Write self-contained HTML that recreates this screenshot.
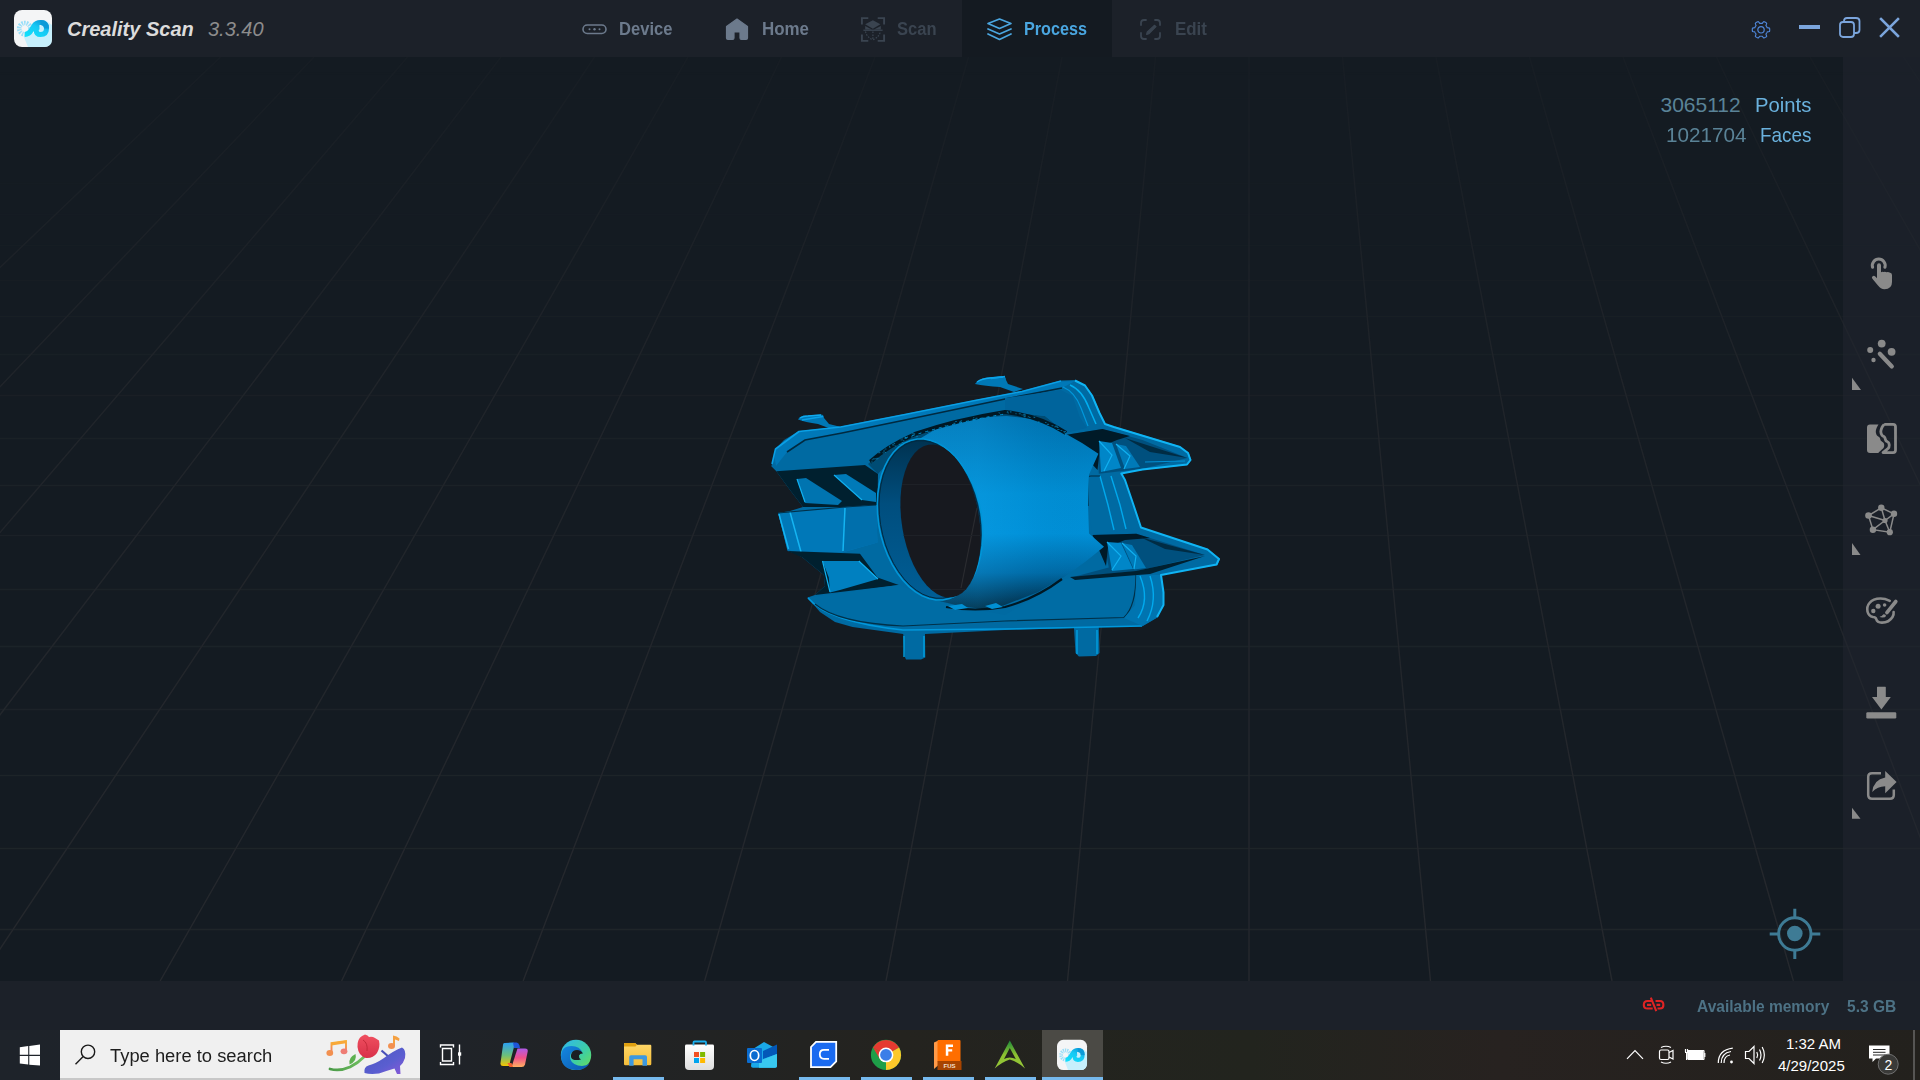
<!DOCTYPE html>
<html><head><meta charset="utf-8">
<style>
*{margin:0;padding:0;box-sizing:border-box}
html,body{width:1920px;height:1080px;overflow:hidden;background:#141b22;font-family:"Liberation Sans",sans-serif}
.a{position:absolute}
#hdr{left:0;top:0;width:1920px;height:57px;background:#1c2129}
#tabact{left:962px;top:0;width:150px;height:57px;background:#141a21}
.tt{font-weight:bold;font-size:18px;line-height:20px;top:19px;white-space:nowrap;transform-origin:0 0}
#vp{left:0;top:57px;width:1920px;height:924px;overflow:hidden}
#side{left:1843px;top:57px;width:77px;height:924px;background:rgba(34,38,47,0.5)}
#status{left:0;top:981px;width:1920px;height:49px;background:#1c2129}
#task{left:0;top:1030px;width:1920px;height:50px;background:linear-gradient(90deg,#1e232a 0px,#1f2329 420px,#24231f 900px,#22241e 1250px,#272220 1500px,#23211d 1920px)}
svg{position:absolute;overflow:visible}
</style></head><body>
<div id="vp" class="a">
<svg width="1920" height="924" viewBox="0 57 1920 924" style="left:0;top:0"><defs><linearGradient id="fade" x1="0" y1="57" x2="0" y2="981" gradientUnits="userSpaceOnUse"><stop offset="0" stop-color="#fff" stop-opacity="0.2"/><stop offset="0.35" stop-color="#fff" stop-opacity="0.7"/><stop offset="1" stop-color="#fff" stop-opacity="1"/></linearGradient><mask id="gm" maskUnits="userSpaceOnUse" x="0" y="57" width="1920" height="924"><rect x="0" y="57" width="1920" height="924" fill="url(#fade)"/></mask><linearGradient id="fadeh" x1="0" y1="57" x2="0" y2="981" gradientUnits="userSpaceOnUse"><stop offset="0" stop-color="#fff" stop-opacity="0.1"/><stop offset="0.4" stop-color="#fff" stop-opacity="0.75"/><stop offset="1" stop-color="#fff" stop-opacity="1"/></linearGradient><mask id="gmh" maskUnits="userSpaceOnUse" x="0" y="57" width="1920" height="924"><rect x="0" y="57" width="1920" height="924" fill="url(#fadeh)"/></mask></defs><g mask="url(#gm)">
<g stroke="#20262a" stroke-width="1.3" mask="url(#gmh)"><line x1="0" y1="73.5" x2="1920" y2="73.5"/><line x1="0" y1="98.5" x2="1920" y2="98.5"/><line x1="0" y1="126.5" x2="1920" y2="126.5"/><line x1="0" y1="154.5" x2="1920" y2="154.5"/><line x1="0" y1="183.5" x2="1920" y2="183.5"/><line x1="0" y1="214.5" x2="1920" y2="214.5"/><line x1="0" y1="245.5" x2="1920" y2="245.5"/><line x1="0" y1="280.5" x2="1920" y2="280.5"/><line x1="0" y1="316.5" x2="1920" y2="316.5"/><line x1="0" y1="354.5" x2="1920" y2="354.5"/><line x1="0" y1="395.5" x2="1920" y2="395.5"/><line x1="0" y1="438.5" x2="1920" y2="438.5"/><line x1="0" y1="485.5" x2="1920" y2="485.5"/><line x1="0" y1="535.5" x2="1920" y2="535.5"/><line x1="0" y1="589.5" x2="1920" y2="589.5"/><line x1="0" y1="646.5" x2="1920" y2="646.5"/><line x1="0" y1="709.5" x2="1920" y2="709.5"/><line x1="0" y1="775.5" x2="1920" y2="775.5"/><line x1="0" y1="848.5" x2="1920" y2="848.5"/><line x1="0" y1="929.5" x2="1920" y2="929.5"/></g>
<g stroke="#26292e" stroke-width="1.4"><line x1="220.5" y1="57" x2="-747.3" y2="981"/><line x1="314.0" y1="57" x2="-565.8" y2="981"/><line x1="407.5" y1="57" x2="-384.3" y2="981"/><line x1="501.0" y1="57" x2="-202.8" y2="981"/><line x1="594.5" y1="57" x2="-21.3" y2="981"/><line x1="688.0" y1="57" x2="160.1" y2="981"/><line x1="781.5" y1="57" x2="341.6" y2="981"/><line x1="875.0" y1="57" x2="523.1" y2="981"/><line x1="968.5" y1="57" x2="704.6" y2="981"/><line x1="1062.0" y1="57" x2="886.0" y2="981"/><line x1="1155.5" y1="57" x2="1067.5" y2="981"/><line x1="1249.0" y1="57" x2="1249.0" y2="981"/><line x1="1342.5" y1="57" x2="1430.5" y2="981"/><line x1="1436.0" y1="57" x2="1612.0" y2="981"/><line x1="1529.5" y1="57" x2="1793.4" y2="981"/><line x1="1623.0" y1="57" x2="1974.9" y2="981"/><line x1="1716.5" y1="57" x2="2156.4" y2="981"/><line x1="1810.0" y1="57" x2="2337.9" y2="981"/><line x1="1903.5" y1="57" x2="2519.3" y2="981"/></g>
</g></svg>
</div>

<svg class="a" style="left:0;top:0" width="1920" height="1080" viewBox="0 0 1920 1080">
<defs>
<linearGradient id="tubeV" x1="0" y1="416" x2="0" y2="612" gradientUnits="userSpaceOnUse"><stop offset="0" stop-color="#0072b0"/><stop offset="0.4" stop-color="#008ed4"/><stop offset="0.6" stop-color="#0090d8"/><stop offset="0.8" stop-color="#006aa6"/><stop offset="0.92" stop-color="#003c60"/><stop offset="1" stop-color="#001c2c"/></linearGradient>
<linearGradient id="tubeH" x1="978" y1="0" x2="1100" y2="0" gradientUnits="userSpaceOnUse"><stop offset="0" stop-color="#20b8ff" stop-opacity="0.18"/><stop offset="0.35" stop-color="#20b8ff" stop-opacity="0.06"/><stop offset="1" stop-color="#000000" stop-opacity="0.0"/></linearGradient>
<linearGradient id="wallG" x1="0" y1="440" x2="0" y2="600" gradientUnits="userSpaceOnUse"><stop offset="0" stop-color="#003250"/><stop offset="0.4" stop-color="#004e7e"/><stop offset="1" stop-color="#005e96"/></linearGradient>
</defs>
<polygon fill="#006aa2" points="799.0,431.0 840.7,426.6 905.0,414.0 975.0,400.0 1022.0,391.0 1061.0,380.6 1075.0,380.0 1085.0,385.0 1092.5,395.0 1100.0,412.5 1105.0,423.8 1113.8,426.3 1180.0,446.3 1188.8,452.5 1191.3,460.0 1187.5,465.0 1142.5,470.0 1121.3,473.8 1125.0,480.0 1133.8,505.0 1141.3,527.5 1207.5,548.8 1220.0,558.8 1217.5,565.0 1161.3,575.0 1163.8,592.5 1163.8,605.0 1157.5,617.5 1142.5,626.3 1098.8,627.0 1099.5,653.0 1096.0,656.0 1078.9,656.5 1075.5,653.0 1074.0,628.0 1005.0,630.0 925.0,634.0 925.3,657.4 921.0,659.5 906.0,659.5 904.5,656.0 903.2,634.0 852.5,627.0 835.0,622.0 820.0,612.0 807.5,597.5 815.0,595.0 825.0,586.0 823.8,575.0 802.5,557.5 796.3,553.8 787.5,551.0 778.1,513.1 790.0,511.0 803.0,507.0 790.0,490.0 776.3,471.3 771.3,466.3 773.8,457.5 775.5,448.9 784.0,440.0" />
<path fill="#0078b6" d="M798 419.5 Q800 415.5 806 415.5 L821 414.5 Q824 414.5 824 418 L829 424 L841 427 L834 430 L818 424 Q805 422 798 419.5 Z"/>
<path fill="none" stroke="#10aaee" stroke-width="1.3" d="M800 418 Q803 416 808 416 L821 415"/>
<path fill="#0078b6" d="M975 384 Q978 379 987 377.5 L1002 376 Q1006 376 1006 380 L1008 384 L1023 389 L1014 392 L1000 387 Q985 386 975 384 Z"/>
<path fill="none" stroke="#10aaee" stroke-width="1.3" d="M977 382 Q982 378.5 990 378 L1003 377"/>
<polygon fill="#0078b8" points="776.0,466.0 774.5,457.5 776.0,449.0 799.0,432.0 840.7,427.5 905.0,415.0 975.0,401.0 1022.0,392.0 1061.0,381.5 1075.0,381.0 1062.0,388.0 1005.0,399.0 905.0,420.0 842.0,433.0 805.0,440.0 787.0,452.0" />
<path fill="none" stroke="#002a40" stroke-width="1.6" d="M787 452 L805 440 L842 433 L905 420 L1005 399 L1062 388"/>
<polygon fill="#004c74" points="868.0,464.0 890.0,446.0 915.0,433.0 952.0,421.0 1005.0,412.0 1045.0,416.0 1066.0,433.0 1030.0,428.0 990.0,430.0 950.0,437.0 921.0,442.0 895.0,455.0 878.0,474.0" />
<polygon fill="#00202f" points="776.3,471.3 865.0,465.0 878.0,474.0 877.5,505.0 845.0,507.0 803.0,507.0 790.0,490.0" />
<polygon fill="#0074b0" points="797.0,479.0 806.0,478.0 842.0,501.0 838.0,505.0 805.0,503.0" />
<polygon fill="#007ab8" points="834.0,475.0 846.0,474.0 876.0,493.0 876.0,502.0 862.0,500.0" />
<path fill="none" stroke="#10b0f0" stroke-width="1.2" d="M797 479 L805 502 M834 475 L862 500"/>
<polygon fill="#0078b8" points="778.1,513.1 845.0,507.0 876.0,505.0 877.5,542.5 842.5,552.5 801.3,553.1 787.5,550.0" />
<polygon fill="#006fac" points="845.0,507.0 876.0,505.0 877.5,542.5 843.0,552.0" />
<path fill="none" stroke="#14b4f2" stroke-width="1.5" d="M779 514 L788.5 549 M790 512 L801 552 M845 508 L843 551"/>
<path fill="none" stroke="#003048" stroke-width="1.2" d="M778 513 L845 507 L876 505"/>
<polygon fill="#00202f" points="787.5,551.0 860.0,553.8 877.5,577.5 898.8,585.0 815.0,595.0 825.0,586.0 823.8,575.0 802.5,557.5" />
<polygon fill="#0080c0" points="822.5,561.0 858.8,561.0 878.0,579.0 840.0,590.0 830.0,592.5 828.8,577.5" />
<path fill="none" stroke="#10b0f0" stroke-width="1.2" d="M822.5 561 L830 592 M858.8 561 L878 579"/>
<polygon fill="#006ca4" points="807.5,597.5 898.8,585.0 946.0,603.8 1005.0,615.0 1065.0,578.8 1136.3,575.0 1135.0,605.0 1123.8,617.5 1005.0,621.3 902.5,631.0 852.5,625.0 825.0,613.8" />
<path fill="none" stroke="#0098dc" stroke-width="1.6" d="M808 598 Q828 622 903 630 L1005 629 L1074 627.5 L1142 626"/>
<path fill="none" stroke="#003048" stroke-width="1.2" d="M815 604 Q838 623 903 626 L1005 621 L1124 617.5 Q1136 606 1136 575"/>
<polygon fill="#00649c" points="1005.0,398.0 1061.0,390.0 1072.5,396.0 1080.0,417.5 1087.0,428.0 1066.0,433.0 1045.0,416.0 1005.0,411.0" />
<path fill="none" stroke="#00aef0" stroke-width="1.5" d="M1070 385 Q1082 390 1089 408 L1096 424"/>
<path fill="none" stroke="#0098dc" stroke-width="1.2" d="M1063 387 Q1075 392 1081 408 L1088 426"/>
<polygon fill="#00507e" points="1065.0,435.0 1102.5,429.0 1142.5,440.0 1187.5,458.0 1142.5,468.8 1098.8,473.8 1097.5,447.5" />
<polygon fill="#001a28" points="1065.0,435.0 1102.5,429.0 1130.0,436.0 1117.0,440.0 1100.0,447.0 1097.5,470.0" />
<polygon fill="#002c44" points="1125.0,438.0 1187.5,458.0 1150.0,452.0" />
<polygon fill="#0086c8" points="1099.0,441.0 1112.0,443.0 1121.0,468.0 1101.0,472.0" />
<polygon fill="#007ab8" points="1116.0,444.0 1126.0,446.0 1140.0,467.0 1125.0,469.0" />
<path fill="none" stroke="#10b0f0" stroke-width="1.2" d="M1099 441 L1112 455 L1104 471 M1116 444 L1130 456 L1124 469"/>
<path fill="none" stroke="#0090d4" stroke-width="1.2" d="M1145 462 L1185 461"/>
<polygon fill="#006aa2" points="1087.5,477.0 1123.8,477.5 1133.8,505.0 1141.3,527.5 1092.5,535.0 1087.5,505.0" />
<path fill="none" stroke="#00a8ec" stroke-width="1.4" d="M1100 476 L1108 505 L1114 530 M1111 476 L1120 505 L1126 529"/>
<path fill="none" stroke="#002a40" stroke-width="1.2" d="M1088 506 L1088 478 Q1088 476 1091 476 L1100 476"/>
<polygon fill="#00507e" points="1092.5,535.0 1136.3,533.8 1205.0,555.0 1136.3,571.3 1071.3,577.5 1108.8,567.5 1105.0,547.5" />
<polygon fill="#001a28" points="1092.5,535.0 1136.3,533.8 1150.0,538.0 1125.0,540.0 1108.0,547.0 1106.0,566.0" />
<polygon fill="#002c44" points="1140.0,537.0 1205.0,555.0 1165.0,549.0" />
<polygon fill="#0086c8" points="1107.0,542.0 1121.0,543.0 1133.0,569.0 1112.0,571.0" />
<polygon fill="#007ab8" points="1122.0,543.0 1132.0,545.0 1146.0,568.0 1134.0,569.5" />
<path fill="none" stroke="#10b0f0" stroke-width="1.2" d="M1107 542 L1121 556 L1112 570 M1122 543 L1136 556 L1134 569"/>
<polygon fill="#002030" points="1070.0,577.0 1136.0,571.0 1205.0,556.0 1150.0,574.0 1075.0,580.0" />
<polygon fill="#0074b0" points="1136.3,575.0 1161.0,575.0 1163.5,592.5 1163.5,605.0 1157.0,617.5 1142.5,626.0 1124.0,618.0 1135.0,605.0" />
<path fill="none" stroke="#00aaee" stroke-width="1.4" d="M1140 576 Q1150 600 1138 618 M1150 576 Q1158 600 1147 621"/>
<polygon fill="url(#tubeV)" points="917.7,440.0 947.3,422.2 975.0,417.6 1006.6,416.0 1037.7,419.5 1064.0,432.8 1082.0,443.0 1098.4,453.7 1089.0,474.6 1088.0,505.0 1089.0,533.4 1104.0,546.7 1085.0,562.0 1064.0,577.0 1037.7,592.2 1003.5,605.5 982.6,609.0 960.0,606.0 935.5,600.0 946.0,593.0 965.0,585.0 977.5,561.0 981.0,530.0 977.5,505.0 970.0,482.5 952.5,457.5 928.8,445.0" />
<polygon fill="url(#tubeH)" points="917.7,440.0 947.3,422.2 975.0,417.6 1006.6,416.0 1037.7,419.5 1064.0,432.8 1082.0,443.0 1098.4,453.7 1089.0,474.6 1088.0,505.0 1089.0,533.4 1104.0,546.7 1085.0,562.0 1064.0,577.0 1037.7,592.2 1003.5,605.5 982.6,609.0 960.0,606.0 935.5,600.0 946.0,593.0 965.0,585.0 977.5,561.0 981.0,530.0 977.5,505.0 970.0,482.5 952.5,457.5 928.8,445.0" />
<path fill="none" stroke="#001824" stroke-width="4" d="M870 462 Q886 447 915 434 Q955 420 1005 412 Q1040 416 1066 433"/>
<path fill="none" stroke="#0090d0" stroke-width="1" stroke-dasharray="3 4" d="M905 438 Q955 422 1005 414"/>
<path fill="none" stroke="#001824" stroke-width="2.2" d="M946 607 Q975 612 1005 607 Q1035 599 1062 579"/>
<path fill="#0090d4" d="M948 606 L962 604 L968 608 L955 610 Z M985 606 L996 603 L1003 607 L992 609 Z"/>
<path fill="#0a9ad8" opacity="0.55" d="M998.0 412.4h2.2v1.1h-1.1zM1007.2 412.5h1.7v1.1h-1.1zM891.8 444.3h2.4v1.1h-1.9zM1062.8 431.6h2.5v1.1h-1.1zM878.8 452.1h1.5v1.1h-2.2zM872.2 459.2h1.1v1.1h-2.1zM1009.9 411.3h1.6v1.1h-1.5zM1061.0 429.9h1.3v1.1h-2.2zM894.2 445.5h2.1v1.1h-1.4zM875.0 458.2h1.2v1.1h-1.7zM913.0 433.3h2.2v1.1h-2.2zM975.8 417.8h1.7v1.1h-2.3zM953.4 422.7h2.1v1.1h-2.0zM1056.0 426.5h2.0v1.1h-1.0zM944.7 425.2h1.3v1.1h-1.4zM1023.3 414.3h1.1v1.1h-1.7zM1023.5 413.8h1.8v1.1h-2.1zM973.2 417.2h1.1v1.1h-1.2zM1021.2 414.5h1.4v1.1h-1.0zM959.9 421.2h1.2v1.1h-2.3zM1046.8 423.8h2.3v1.1h-2.4zM1054.7 426.2h1.2v1.1h-2.0zM876.3 458.3h1.2v1.1h-1.9zM868.4 460.6h1.5v1.1h-1.0zM893.6 442.9h1.5v1.1h-1.5zM875.8 458.5h1.7v1.1h-1.5zM872.5 458.3h2.2v1.1h-1.2zM876.6 457.7h2.0v1.1h-2.4zM1023.4 416.1h2.3v1.1h-1.8zM883.2 450.5h1.8v1.1h-2.0zM1057.3 429.0h2.2v1.1h-2.2zM1055.4 425.6h2.1v1.1h-2.5zM955.4 420.9h1.5v1.1h-2.2zM1064.8 434.4h1.3v1.1h-1.3zM884.2 452.0h1.9v1.1h-1.0zM1029.4 416.9h1.2v1.1h-1.6zM1051.2 425.2h2.2v1.1h-1.5zM1033.1 416.8h2.1v1.1h-1.3zM870.8 461.5h2.0v1.1h-1.9zM1064.4 433.0h1.8v1.1h-1.2zM902.3 440.2h2.1v1.1h-1.2zM904.3 437.4h1.4v1.1h-1.4zM1028.2 416.2h1.1v1.1h-2.1zM972.5 419.3h2.2v1.1h-2.3zM888.8 446.7h1.7v1.1h-1.3zM901.2 438.5h1.9v1.1h-1.2zM882.0 452.5h2.2v1.1h-1.2zM1007.1 411.3h1.1v1.1h-1.7zM901.6 442.0h1.9v1.1h-1.8zM1018.6 413.2h2.2v1.1h-1.8zM900.5 443.5h1.4v1.1h-1.8zM904.5 436.8h1.7v1.1h-1.1zM885.3 448.4h1.2v1.1h-2.2zM1045.3 422.0h1.2v1.1h-1.7zM1063.5 431.0h2.5v1.1h-2.2zM898.7 443.8h1.6v1.1h-1.5zM900.1 439.5h1.7v1.1h-1.0zM960.9 420.3h1.2v1.1h-2.4zM912.4 433.2h1.1v1.1h-2.2zM982.6 417.5h2.0v1.1h-2.4zM927.5 431.6h2.1v1.1h-1.1zM905.5 438.0h1.4v1.1h-1.0zM905.4 437.6h1.1v1.1h-2.3zM915.6 435.7h2.4v1.1h-1.9zM888.9 445.7h1.2v1.1h-1.1zM911.3 436.3h1.3v1.1h-1.7zM1015.2 413.2h1.4v1.1h-1.0zM1038.2 421.3h1.4v1.1h-1.7zM1056.3 427.0h2.3v1.1h-1.6zM1024.6 414.6h1.3v1.1h-2.3z"/>
<path fill="url(#wallG)" d="M982.4 524.7 L982.7 535.2 L982.2 545.4 L980.7 555.1 L978.4 564.3 L975.2 572.6 L971.3 580.1 L966.7 586.5 L961.4 591.8 L955.6 595.9 L949.4 598.6 L942.8 600.0 L936.0 600.0 L929.1 598.6 L922.2 595.9 L915.5 591.9 L909.0 586.6 L902.9 580.2 L897.2 572.7 L892.1 564.4 L887.6 555.2 L883.9 545.5 L880.9 535.3 L878.8 524.9 L877.6 514.3 L877.3 503.8 L877.8 493.6 L879.3 483.9 L881.6 474.7 L884.8 466.4 L888.7 458.9 L893.3 452.5 L898.6 447.2 L904.4 443.1 L910.6 440.4 L917.2 439.0 L924.0 439.0 L930.9 440.4 L937.8 443.1 L944.5 447.1 L951.0 452.4 L957.1 458.8 L962.8 466.3 L967.9 474.6 L972.4 483.8 L976.1 493.5 L979.1 503.7 L981.2 514.1 Z"/>
<path fill="none" stroke="#0096d8" stroke-width="1.6" d="M982.4 524.7 L982.7 535.2 L982.2 545.4 L980.7 555.1 L978.4 564.3 L975.2 572.6 L971.3 580.1 L966.7 586.5 L961.4 591.8 L955.6 595.9 L949.4 598.6 L942.8 600.0 L936.0 600.0 L929.1 598.6 L922.2 595.9 L915.5 591.9 L909.0 586.6 L902.9 580.2 L897.2 572.7 L892.1 564.4 L887.6 555.2 L883.9 545.5 L880.9 535.3 L878.8 524.9 L877.6 514.3 L877.3 503.8 L877.8 493.6 L879.3 483.9 L881.6 474.7 L884.8 466.4 L888.7 458.9 L893.3 452.5 L898.6 447.2 L904.4 443.1 L910.6 440.4 L917.2 439.0 L924.0 439.0 L930.9 440.4 L937.8 443.1 L944.5 447.1 L951.0 452.4 L957.1 458.8 L962.8 466.3 L967.9 474.6 L972.4 483.8 L976.1 493.5 L979.1 503.7 L981.2 514.1 Z"/>
<path fill="none" stroke="#002a40" stroke-width="1" d="M980.6 524.7 L981.0 534.9 L980.4 544.9 L979.0 554.4 L976.8 563.4 L973.8 571.5 L970.0 578.8 L965.6 585.1 L960.5 590.3 L954.9 594.2 L948.9 596.9 L942.6 598.2 L936.0 598.2 L929.3 596.8 L922.7 594.2 L916.2 590.2 L909.9 585.1 L904.0 578.8 L898.5 571.5 L893.5 563.3 L889.2 554.3 L885.5 544.8 L882.7 534.8 L880.6 524.6 L879.4 514.3 L879.0 504.1 L879.6 494.1 L881.0 484.6 L883.2 475.6 L886.2 467.5 L890.0 460.2 L894.4 453.9 L899.5 448.7 L905.1 444.8 L911.1 442.1 L917.4 440.8 L924.0 440.8 L930.7 442.2 L937.3 444.8 L943.8 448.8 L950.1 453.9 L956.0 460.2 L961.5 467.5 L966.5 475.7 L970.8 484.7 L974.5 494.2 L977.3 504.2 L979.4 514.4 Z"/>
<path fill="#17191f" d="M980.0 524.5 L980.6 534.5 L980.5 544.2 L979.7 553.5 L978.2 562.3 L976.1 570.3 L973.4 577.6 L970.1 583.8 L966.3 589.0 L962.1 593.0 L957.5 595.8 L952.6 597.3 L947.5 597.5 L942.3 596.4 L937.0 594.0 L931.9 590.3 L926.8 585.5 L922.0 579.6 L917.5 572.6 L913.4 564.8 L909.8 556.2 L906.7 547.0 L904.2 537.4 L902.3 527.5 L901.0 517.5 L900.4 507.5 L900.5 497.8 L901.3 488.5 L902.8 479.7 L904.9 471.7 L907.6 464.4 L910.9 458.2 L914.7 453.0 L918.9 449.0 L923.5 446.2 L928.4 444.7 L933.5 444.5 L938.7 445.6 L944.0 448.0 L949.1 451.7 L954.2 456.5 L959.0 462.4 L963.5 469.4 L967.6 477.2 L971.2 485.8 L974.3 495.0 L976.8 504.6 L978.7 514.5 Z"/>
<clipPath id="holeclip"><path d="M980.0 524.5 L980.6 534.5 L980.5 544.2 L979.7 553.5 L978.2 562.3 L976.1 570.3 L973.4 577.6 L970.1 583.8 L966.3 589.0 L962.1 593.0 L957.5 595.8 L952.6 597.3 L947.5 597.5 L942.3 596.4 L937.0 594.0 L931.9 590.3 L926.8 585.5 L922.0 579.6 L917.5 572.6 L913.4 564.8 L909.8 556.2 L906.7 547.0 L904.2 537.4 L902.3 527.5 L901.0 517.5 L900.4 507.5 L900.5 497.8 L901.3 488.5 L902.8 479.7 L904.9 471.7 L907.6 464.4 L910.9 458.2 L914.7 453.0 L918.9 449.0 L923.5 446.2 L928.4 444.7 L933.5 444.5 L938.7 445.6 L944.0 448.0 L949.1 451.7 L954.2 456.5 L959.0 462.4 L963.5 469.4 L967.6 477.2 L971.2 485.8 L974.3 495.0 L976.8 504.6 L978.7 514.5 Z"/></clipPath>
<g clip-path="url(#holeclip)"><path stroke="#2a2b30" stroke-width="1.2" d="M977 508 L961 588"/><path stroke="#1e2127" stroke-width="1" d="M880 484.5 H990 M880 535.5 H990 M880 589.5 H990"/></g>
<path fill="none" stroke="#10b4f4" stroke-width="2" stroke-linejoin="round" d="M1075 380.5 L1085 385.5 L1092 395.5 L1099.5 413 L1105 424 L1113.8 427 L1180 447 L1188 453 L1190.5 460 L1187 464.5 L1142.5 469.5 L1121.3 473.5 L1125 480 L1133.5 505 L1141 527.5 L1207.5 549.5 L1219 559 L1216.5 564.5 L1161 575 L1163.5 592.5 L1163.5 605 L1157 617"/>
<path fill="none" stroke="#0aa0e6" stroke-width="1.6" stroke-linejoin="round" d="M772 464 L775.5 449 L799 431.5 L840.7 427 L905 414.5 L975 400.5 L1022 391.5 L1061 381"/>
<path fill="none" stroke="#0aa0e6" stroke-width="1.5" d="M802 420 L823 416.5 M991 378.5 L1005 376.5"/>
<path fill="none" stroke="#00a0e0" stroke-width="1.4" d="M904 657 V636 M924 657 V636 M1077 654 V630 M1097 654 V630"/>
</svg>
<div id="side" class="a"></div>
<div id="hdr" class="a"></div>
<div id="tabact" class="a"></div>

<!-- logo -->
<svg class="a" style="left:14px;top:10px" width="38" height="37" viewBox="0 0 38 37">
<defs><linearGradient id="lg1" x1="0" y1="1" x2="1" y2="0"><stop offset="0" stop-color="#10e0fb"/><stop offset="0.6" stop-color="#16c8f4"/><stop offset="1" stop-color="#0898d8"/></linearGradient></defs>
<rect x="0" y="0" width="38" height="37" rx="8" fill="#f4f5f6"/>
<path d="M9.5 26 L14 37 H30 Q38 37 38 29 V15 L31 10 L22 22 Z" fill="#c6effc"/>
<circle cx="10.8" cy="18.6" r="5.6" fill="none" stroke="#8fdcf8" stroke-width="4.6" stroke-dasharray="1.5 1" opacity="0.9"/>
<path d="M10.8 24.4 Q15 24.4 17.5 20 L19.5 16.5 Q22 12.6 26.5 12.6 Q32.5 12.6 32.5 18.6 Q32.5 24.6 26.5 24.6 Q22.2 24.6 22.2 20.5 Q22.2 17 25.5 17" fill="none" stroke="url(#lg1)" stroke-width="5"/>
<path d="M26.5 12.6 Q32.5 12.6 32.5 18.6" fill="none" stroke="#0a9ad8" stroke-width="5"/>
</svg>
<div class="a" style="left:67px;top:18px;font:italic bold 20px 'Liberation Sans';color:#dcdcdc;white-space:nowrap">Creality Scan</div>
<div class="a" style="left:208px;top:18px;font:italic 20px 'Liberation Sans';color:#8c8c8c;white-space:nowrap">3.3.40</div>

<!-- tabs -->
<svg class="a" style="left:582px;top:24px" width="25" height="11" viewBox="0 0 25 11"><rect x="1" y="1" width="23" height="8.5" rx="4.25" fill="none" stroke="#6c7a8c" stroke-width="1.6"/><circle cx="7.5" cy="5.2" r="1" fill="#6c7a8c"/><circle cx="12.5" cy="5.2" r="1.2" fill="#6c7a8c"/><circle cx="17.5" cy="5.2" r="1" fill="#6c7a8c"/></svg>
<div class="a tt" style="left:619px;color:#6c7a8c;transform:scaleX(0.92)">Device</div>
<svg class="a" style="left:725px;top:18px" width="24" height="23" viewBox="0 0 24 23"><path d="M1.5 8.5 L12 1 L22.5 8.5 V20 Q22.5 21.5 21 21.5 H16.5 Q15 21.5 15 20 V14 H9 V20 Q9 21.5 7.5 21.5 H3 Q1.5 21.5 1.5 20 Z" fill="#6c7a8c" stroke="#6c7a8c" stroke-width="1.2" stroke-linejoin="round"/></svg>
<div class="a tt" style="left:762px;color:#6c7a8c;transform:scaleX(0.94)">Home</div>
<svg class="a" style="left:0;top:0" width="1920" height="60" viewBox="0 0 1920 60"><g fill="none" stroke="#3a4450" stroke-width="1.9"><path d="M861.9 24.5V18.1H868.3M877.7 18.1H884.1V24.5M884.1 34.5V40.9H877.7M868.3 40.9H861.9V34.5"/></g>
<g fill="#3a4450"><path d="M865.2 24.3L872.9 20.3 880.4 24.3 872.9 28.7Z"/><path d="M865.2 26L865.2 29.6 871.8 29.6Z"/><path d="M880.8 26L880.8 29.6 874 29.6Z"/><rect x="863.4" y="29.6" width="19.2" height="1.3"/></g>
<g fill="none" stroke="#3a4450" stroke-width="1.2" stroke-dasharray="1.6 1.3"><path d="M865.5 31.5Q866.5 37 872.9 39.8Q879.3 37 880.4 31.5M872.9 31.5V39"/></g></svg>
<div class="a tt" style="left:897px;color:#3a4450;transform:scaleX(0.92)">Scan</div>
<svg class="a" style="left:987px;top:18px" width="26" height="23" viewBox="0 0 26 23" fill="none" stroke="#4aa6e0" stroke-width="1.7" stroke-linejoin="round" stroke-linecap="round"><path d="M1 5.5L12.5 1 24 5.5 12.5 10.5Z"/><path d="M1 11L12.5 16 24 11"/><path d="M1 16L12.5 21.5 24 16"/></svg>
<div class="a tt" style="left:1024px;color:#4aa6e0;transform:scaleX(0.9)">Process</div>
<svg class="a" style="left:1140px;top:19px" width="21" height="21" viewBox="0 0 21 21" fill="none" stroke="#3a4450" stroke-width="1.8" stroke-linecap="round"><path d="M1 6V4Q1 1 4 1H6M15 1H17Q20 1 20 4V6M20 14V17Q20 20 17 20H15M6 20H4Q1 20 1 17V14"/><path d="M14.6 6.3L16 7.7 9 14.7 6.6 15.4 7.3 13Z" fill="#3a4450" stroke-width="1.2" stroke-linejoin="round"/></svg>
<div class="a tt" style="left:1175px;color:#3a4450;transform:scaleX(0.94)">Edit</div>

<!-- window controls -->
<svg class="a" style="left:1751px;top:19.5px" width="20" height="20" viewBox="0 0 20 20"><path d="M18.70 9.80 L18.68 10.37 L18.63 10.94 L18.49 11.49 L17.34 11.77 L16.20 11.90 L16.01 12.29 L15.83 12.67 L15.63 13.05 L15.40 13.41 L15.16 13.76 L14.92 14.12 L15.37 15.17 L15.70 16.31 L15.30 16.70 L14.83 17.03 L14.35 17.33 L13.85 17.60 L13.33 17.84 L12.78 17.99 L11.97 17.14 L11.28 16.22 L10.85 16.24 L10.43 16.29 L10.00 16.30 L9.57 16.29 L9.15 16.24 L8.72 16.22 L8.03 17.14 L7.22 17.99 L6.67 17.84 L6.15 17.60 L5.65 17.33 L5.17 17.03 L4.70 16.70 L4.30 16.31 L4.63 15.17 L5.08 14.12 L4.84 13.76 L4.60 13.41 L4.37 13.05 L4.17 12.67 L3.99 12.29 L3.80 11.90 L2.66 11.77 L1.51 11.49 L1.37 10.94 L1.32 10.37 L1.30 9.80 L1.32 9.23 L1.37 8.66 L1.51 8.11 L2.66 7.83 L3.80 7.70 L3.99 7.31 L4.17 6.93 L4.37 6.55 L4.60 6.19 L4.84 5.84 L5.08 5.48 L4.63 4.43 L4.30 3.29 L4.70 2.90 L5.17 2.57 L5.65 2.27 L6.15 2.00 L6.67 1.76 L7.22 1.61 L8.03 2.46 L8.72 3.38 L9.15 3.36 L9.57 3.31 L10.00 3.30 L10.43 3.31 L10.85 3.36 L11.28 3.38 L11.97 2.46 L12.78 1.61 L13.33 1.76 L13.85 2.00 L14.35 2.27 L14.83 2.57 L15.30 2.90 L15.70 3.29 L15.37 4.43 L14.92 5.48 L15.16 5.84 L15.40 6.19 L15.63 6.55 L15.83 6.93 L16.01 7.31 L16.20 7.70 L17.34 7.83 L18.49 8.11 L18.63 8.66 L18.68 9.23 Z" fill="none" stroke="#4f86d8" stroke-width="1.15" stroke-linejoin="round"/><circle cx="10" cy="9.8" r="3.2" fill="none" stroke="#4f86d8" stroke-width="1.2"/></svg>
<div class="a" style="left:1799px;top:25px;width:21px;height:4px;background:#7ba5dc"></div>
<svg class="a" style="left:1839px;top:17px" width="22" height="21" viewBox="0 0 22 21" fill="none" stroke="#7ba5dc" stroke-width="1.8"><rect x="1" y="5" width="14" height="15" rx="3"/><path d="M5 5V4Q5 1 8 1H17Q20.5 1 20.5 4V13Q20.5 16 17 16H15"/></svg>
<svg class="a" style="left:1879px;top:17px" width="21" height="21" viewBox="0 0 21 21" stroke="#7ba5dc" stroke-width="2.5" stroke-linecap="square"><path d="M2 2L19 19M19 2L2 19"/></svg>

<!-- points/faces -->
<div class="a" style="left:1660.5px;top:93px;font:21px 'Liberation Sans';color:#5a8397;white-space:nowrap;transform:scaleX(1.0);transform-origin:0 0">3065112</div>
<div class="a" style="left:1755px;top:93px;font:21px 'Liberation Sans';color:#6ab1dd;white-space:nowrap;transform:scaleX(0.965);transform-origin:0 0">Points</div>
<div class="a" style="left:1665.5px;top:123px;font:21px 'Liberation Sans';color:#5a8397;white-space:nowrap;transform:scaleX(0.985);transform-origin:0 0">1021704</div>
<div class="a" style="left:1760px;top:123px;font:21px 'Liberation Sans';color:#6ab1dd;white-space:nowrap;transform:scaleX(0.9);transform-origin:0 0">Faces</div>

<div id="status" class="a"></div>
<div id="task" class="a"></div>

<svg class="a" style="left:0;top:0" width="1920" height="1080" viewBox="0 0 1920 1080">
<g fill="#8a8a8a" stroke="none">
<!-- hand -->
<path d="M1872.6 267.2 A6.4 6.4 0 1 1 1884.9 267.2" fill="none" stroke="#8a8a8a" stroke-width="3.1" stroke-linecap="round"/>
<path d="M1877 265.4 Q1877 263.3 1879 263.3 Q1881 263.3 1881 265.4 V272.2 Q1882.3 271.2 1883.6 272 Q1885.2 271.2 1886.6 272.3 Q1888 271.5 1889.5 272.4 Q1892 272.8 1892 275 V282 Q1892 289.2 1884.5 289.2 Q1880.5 289.2 1878 285.5 L1872.4 278.8 Q1871.2 277.3 1872.6 276.2 Q1874 275.3 1875.3 276.5 L1877 278.2 Z"/>
<!-- wand -->
<circle cx="1881.7" cy="343.6" r="3.9"/><circle cx="1891.6" cy="351.8" r="3.9"/><circle cx="1870.2" cy="350" r="3"/><circle cx="1873.5" cy="360" r="2.2"/>
<path d="M1879.8 353.7 L1891.8 366.5" stroke="#8a8a8a" stroke-width="4.2" stroke-linecap="round"/>
<path d="M1852 377.8 L1852 390 L1861 390 Z"/>
<!-- split -->
<path d="M1870 424.4 H1878.5 C1878.22 424.92 1877.25 426.28 1876.80 427.50 C1876.35 428.72 1875.77 430.37 1875.80 431.70 C1875.83 433.03 1876.37 434.52 1877.00 435.50 C1877.63 436.48 1878.95 436.72 1879.60 437.60 C1880.25 438.48 1880.20 439.87 1880.90 440.80 C1881.60 441.73 1883.30 442.12 1883.80 443.20 C1884.30 444.28 1884.40 446.07 1883.90 447.30 C1883.40 448.53 1881.73 449.67 1880.80 450.60 C1879.87 451.53 1878.72 452.52 1878.30 452.90 H1870 Q1867 452.9 1867 450 V427.4 Q1867 424.4 1870 424.4 Z"/>
<path d="M1884.2 424.3 H1893 Q1895.5 424.3 1895.5 426.8 V450 Q1895.5 452.6 1893 452.6 H1883 C1883.47 452.23 1884.82 451.27 1885.80 450.40 C1886.78 449.53 1888.40 448.63 1888.90 447.40 C1889.40 446.17 1889.30 444.13 1888.80 443.00 C1888.30 441.87 1886.60 441.55 1885.90 440.60 C1885.20 439.65 1885.25 438.20 1884.60 437.30 C1883.95 436.40 1882.63 436.15 1882.00 435.20 C1881.37 434.25 1880.80 432.92 1880.80 431.60 C1880.80 430.28 1881.43 428.52 1882.00 427.30 C1882.57 426.08 1883.83 424.80 1884.20 424.30" fill="none" stroke="#8a8a8a" stroke-width="2.8" stroke-linejoin="round"/>
<!-- mesh -->
<g stroke="#8a8a8a" stroke-width="1.5" fill="none"><path d="M1881.3 507.8 L1868.5 515.5 L1872.9 529.7 L1889.8 532.2 L1894 513.8 Z M1881.3 507.8 L1885 520.5 M1868.5 515.5 L1885 520.5 M1894 513.8 L1885 520.5 M1872.9 529.7 L1885 520.5 M1889.8 532.2 L1885 520.5"/></g>
<circle cx="1881.3" cy="507.8" r="3.2"/><circle cx="1868.5" cy="515.5" r="3.3"/><circle cx="1894" cy="513.8" r="3.2"/><circle cx="1872.9" cy="529.7" r="3.2"/><circle cx="1889.8" cy="532.2" r="3.1"/><circle cx="1885" cy="520.5" r="2.6"/>
<path d="M1852 543 L1852 555 L1860.5 555 Z"/>
<!-- palette -->
<path d="M1889.8 600.8 Q1885 598.5 1880.5 598.5 Q1873 598.5 1869.5 603 Q1866.5 606.5 1867.5 611.5 Q1868.5 616 1873 617 Q1875.5 617 1876.2 619 Q1877 622.5 1882 622.6 Q1889 622.6 1892.5 617 Q1894 614.5 1893.6 612" fill="none" stroke="#8a8a8a" stroke-width="2.6" stroke-linecap="round"/>
<circle cx="1878.1" cy="606.3" r="2.5"/><circle cx="1884.6" cy="605" r="1.8"/><circle cx="1873.3" cy="611" r="2.2"/>
<path d="M1895.8 601.5 L1886.9 612.6" stroke="#8a8a8a" stroke-width="3.6" stroke-linecap="round"/>
<path d="M1883.5 614.2 Q1886 614 1886 616 Q1885.5 617.6 1882.5 617.6 Q1880 617.6 1879.6 616.8 Q1881.8 616.6 1883.5 614.2 Z"/>
<!-- download -->
<path d="M1877 687.2 Q1877 686.7 1877.5 686.7 H1885.3 Q1885.8 686.7 1885.8 687.2 V697 H1890.8 L1881.4 709.6 L1872 697 H1877 Z"/>
<rect x="1866.3" y="712.3" width="30" height="6.2" rx="1.2"/>
<!-- share -->
<path d="M1881 773.3 H1872 Q1868.2 773.3 1868.2 777 V795 Q1868.2 798.7 1872 798.7 H1890 Q1893.8 798.7 1893.8 795 V789.5" fill="none" stroke="#8a8a8a" stroke-width="2.5"/>
<path d="M1885.2 771 L1896.6 782 L1885.2 793.3 V786.3 Q1877.5 786.5 1872.2 792 Q1873.5 779.5 1885.2 777.4 Z"/>
<path d="M1852 807.7 L1852 818.8 L1860.5 818.8 Z"/>
</g>
<!-- locate -->
<g stroke="#3e7b95" fill="none" stroke-width="3"><circle cx="1794.8" cy="934" r="16.2"/><path d="M1794.8 908.7V918.5M1794.8 949.5V959M1769.7 934H1779.5M1810 934H1820.3"/></g>
<circle cx="1794.8" cy="933.5" r="7.8" fill="#3e7b95"/>
<!-- broken link -->
<g stroke="#e02424" stroke-width="2.1" fill="none"><path d="M1652.5 1001 H1647.5 Q1643.8 1001 1643.8 1004.9 Q1643.8 1008.5 1647.5 1008.5 H1652.7"/><path d="M1655.5 1001 H1660 Q1663.4 1001 1663.4 1004.9 Q1663.4 1008.5 1660 1008.5 H1657.5"/><path d="M1647 1004.9 H1651.2M1656.5 1004.9 H1660.2"/><path d="M1650.8 997.6 L1656.3 1011.2"/></g>
</svg>
<div class="a" style="left:1697px;top:998px;font:bold 16px 'Liberation Sans';color:#4d7285;white-space:nowrap;transform:scaleX(0.97);transform-origin:0 0">Available memory</div>
<div class="a" style="left:1847px;top:998px;font:bold 16px 'Liberation Sans';color:#4d7285;white-space:nowrap;transform:scaleX(0.97);transform-origin:0 0">5.3 GB</div>


<!-- taskbar -->
<svg class="a" style="left:0;top:0" width="1920" height="1080" viewBox="0 0 1920 1080">
<defs>
<linearGradient id="cpA" x1="0" y1="0" x2="0" y2="1"><stop offset="0" stop-color="#2aa0f5"/><stop offset="0.55" stop-color="#6cc07a"/><stop offset="1" stop-color="#f6c400"/></linearGradient>
<linearGradient id="cpB" x1="0" y1="0" x2="0" y2="1"><stop offset="0" stop-color="#b05ae8"/><stop offset="0.5" stop-color="#f0508a"/><stop offset="1" stop-color="#ffb060"/></linearGradient>
<linearGradient id="edA" x1="0" y1="0" x2="1" y2="1"><stop offset="0" stop-color="#2fb6f0"/><stop offset="0.6" stop-color="#3fd0a0"/><stop offset="1" stop-color="#70e050"/></linearGradient>
<linearGradient id="edB" x1="0" y1="0" x2="1" y2="1"><stop offset="0" stop-color="#1488e0"/><stop offset="1" stop-color="#0c58b0"/></linearGradient>
<linearGradient id="fold" x1="0" y1="0" x2="0" y2="1"><stop offset="0" stop-color="#ffd86a"/><stop offset="1" stop-color="#f5bd3a"/></linearGradient>
<linearGradient id="store" x1="0" y1="0" x2="0" y2="1"><stop offset="0" stop-color="#ffffff"/><stop offset="1" stop-color="#dedede"/></linearGradient>
<linearGradient id="grnA" x1="0" y1="0" x2="0" y2="1"><stop offset="0" stop-color="#1e8a3a"/><stop offset="0.5" stop-color="#8cc030"/><stop offset="1" stop-color="#98c83a"/></linearGradient>
<linearGradient id="lg2" x1="0" y1="1" x2="1" y2="0"><stop offset="0" stop-color="#10e0fb"/><stop offset="0.6" stop-color="#16c8f4"/><stop offset="1" stop-color="#0898d8"/></linearGradient>
</defs>
<!-- search box -->
<rect x="60" y="1030" width="360" height="50" fill="#f0f0f0"/>
<rect x="60" y="1078" width="360" height="2" fill="#c8c8c8"/>
<g stroke="#1a1a1a" stroke-width="1.4" fill="none"><circle cx="88" cy="1051.8" r="6.7"/><path d="M83.2 1056.6 L75.5 1064.3"/></g>
<!-- windows logo -->
<path d="M19.8 1047.3 L28.2 1046.1 V1054.8 H19.8 Z M29.3 1045.9 L40 1044.6 V1054.8 H29.3 Z M19.8 1055.9 H28.2 V1064.6 L19.8 1063.5 Z M29.3 1055.9 H40 V1065.6 L29.3 1064.8 Z" fill="#ffffff"/>
<!-- emoji -->
<defs>
<linearGradient id="noteG" x1="0" y1="0" x2="0" y2="1"><stop offset="0" stop-color="#f8b030"/><stop offset="1" stop-color="#f07a6a"/></linearGradient>
<linearGradient id="roseG" x1="0" y1="0" x2="0" y2="1"><stop offset="0" stop-color="#f05060"/><stop offset="1" stop-color="#d83048"/></linearGradient>
<linearGradient id="shoeG" x1="0" y1="0" x2="1" y2="1"><stop offset="0" stop-color="#4a56c0"/><stop offset="0.6" stop-color="#5a5ed0"/><stop offset="1" stop-color="#8a58d8"/></linearGradient>
<linearGradient id="stemG" x1="0" y1="0" x2="1" y2="0"><stop offset="0" stop-color="#4a9a48"/><stop offset="1" stop-color="#70c060"/></linearGradient>
</defs>
<path d="M331.5 1052.5 V1043 L346 1041 V1050.5" stroke="url(#noteG)" stroke-width="1.9" fill="none"/>
<path d="M331.5 1042.7 L346 1040.6 V1043.3 L331.5 1045.4 Z" fill="#f8a838"/>
<ellipse cx="329.8" cy="1053" rx="3.4" ry="2.9" fill="#f29050"/><ellipse cx="344" cy="1051.3" rx="3.4" ry="2.9" fill="#ee7c74"/>
<path d="M330 1069 Q340 1071.5 350 1067 Q358 1063 364.5 1056.5" stroke="url(#stemG)" stroke-width="2.8" fill="none" stroke-linecap="round"/>
<path d="M349.5 1064.5 Q348 1057.5 355.5 1054 Q357.5 1061 349.5 1064.5 Z" fill="#5cb050"/>
<path d="M357.5 1047 Q357 1039 362 1036 L365 1034.5 Q368 1035 369 1037 Q372 1036 375 1038 L379 1040.5 Q380.5 1047 377 1053 Q373 1058.5 366 1058 Q358.5 1056 357.5 1047 Z" fill="url(#roseG)"/>
<path d="M363 1040 Q368 1043 367 1051" stroke="#c02838" stroke-width="0.9" fill="none"/>
<path d="M393 1046 V1035.5 Q397 1036 399.5 1038.5 L399 1041 Q396 1039.5 395 1039.5 V1046" fill="#f4a040"/>
<ellipse cx="391.5" cy="1046" rx="3.5" ry="3" fill="#f29050"/>
<path d="M381.5 1050.5 L389.5 1057.5" stroke="#4850b8" stroke-width="2.2"/>
<path d="M364.5 1073 Q363.5 1067 368.5 1065.5 Q376 1063.5 384 1058 Q394 1050.5 402 1047.5 Q406.5 1050 405 1058 Q403.5 1063 400 1066 L400.5 1074 L397 1074 L394.5 1068.5 Q386 1071 379 1073.5 Q370 1074.5 364.5 1073 Z" fill="url(#shoeG)"/>
<!-- task view -->
<g stroke="#ffffff" stroke-width="1.4" fill="none"><path d="M440.5 1047.5 V1045 H453.5 V1047.5 M440.5 1062 V1064.5 H453.5 V1062 M442.5 1048.5 H451.5 V1061 H442.5 Z M459.5 1044.5 V1064.5"/></g>
<rect x="458" y="1052.3" width="3.2" height="3.4" fill="#ffffff"/>
<!-- copilot -->
<path d="M505 1043 Q503 1042.6 503 1045 L500.5 1063 Q500 1066 503 1066 H509 L514.5 1045 Q515 1042.6 513 1042.6 Z" fill="url(#cpA)"/>
<path d="M513 1042.6 H516.5 Q518.5 1042.6 519.5 1045.5 L520 1048 L514 1048 Z" fill="#1f55d8"/>
<path d="M517.5 1048.5 H525 Q528.3 1048.5 527.7 1051.5 L525 1064.5 Q524.4 1067 521.5 1067 H511.5 Z" fill="url(#cpB)"/>
<path d="M507.5 1063 L509.5 1067 H513 L511.5 1063 Z" fill="#f06030"/>
<!-- edge -->
<circle cx="576" cy="1054.9" r="15.2" fill="url(#edA)"/>
<path d="M561 1057 Q561 1046 571.5 1046 Q580 1046 582.5 1053 Q580 1050.5 576.5 1050.5 Q571 1050.5 570 1056 Q569.5 1063 578 1065.5 Q585 1067 589.5 1063.5 Q585 1070.5 576 1070.1 Q562 1069.5 561 1057 Z" fill="url(#edB)"/>
<path d="M571 1055 Q572 1050 577 1050 Q581 1050 583 1053.5 Q580 1053.2 579 1055.5 Q578.5 1058 581 1059.5 Q576 1060.5 573 1059.5 Q570.5 1058 571 1055 Z" fill="#1b1e22"/>
<!-- explorer -->
<path d="M624 1044 Q624 1042.9 625 1042.9 H635 L637 1044.8 H650.3 Q651.3 1044.8 651.3 1046 V1064 Q651.3 1065.2 650 1065.2 H625.3 Q624 1065.2 624 1064 Z" fill="url(#fold)"/>
<path d="M624 1044 Q624 1042.9 625 1042.9 H635 L637 1044.8 L635.5 1046.5 H624 Z" fill="#e0a010"/>
<path d="M629.2 1065.8 V1057 Q629.2 1055.2 631 1055.2 H645.2 Q647 1055.2 647 1057 V1065.8 H642.5 V1059.3 H633.6 V1065.8 Z" fill="#3d98e0"/>
<rect x="613" y="1077" width="51" height="3" fill="#76b9ed"/>
<!-- store -->
<path d="M685 1046 Q685 1044.6 686.5 1044.6 H712.5 Q714 1044.6 714 1046 V1066 Q714 1070.1 710 1070.1 H689 Q685 1070.1 685 1066 Z" fill="url(#store)"/>
<path d="M693.5 1045.5 V1042.5 Q693.5 1041.5 694.5 1041.5 H705 Q706 1041.5 706 1042.5 V1045.5" stroke="#1ab0f0" stroke-width="1.8" fill="none"/>
<rect x="694" y="1052" width="5" height="5" fill="#f25022"/><rect x="700.1" y="1052" width="5" height="5" fill="#7fba00"/><rect x="694" y="1058" width="5" height="5" fill="#00a4ef"/><rect x="700.1" y="1058" width="5" height="5" fill="#ffb900"/>
<!-- outlook -->
<path d="M753 1049 L764 1042 L777 1049 V1066 Q777 1067.8 775 1067.8 H753 Q751 1067.8 751 1066 Z" fill="#1aa8e8"/>
<path d="M763 1051 L777 1044.5 V1054 L763 1059 Z" fill="#0358b8"/>
<path d="M759 1061 L777 1054 V1066 Q777 1067.8 775 1067.8 H759 Z" fill="#38c8f0"/>
<rect x="747" y="1048" width="15" height="15" rx="1" fill="#0a6cd0"/>
<ellipse cx="754.5" cy="1055.5" rx="4.2" ry="5" stroke="#fff" stroke-width="1.7" fill="none"/>
<!-- C -->
<path d="M816 1041.8 H836.2 V1061.5 L830.5 1067.2 H811 V1047 Z" fill="#1a6af0" stroke="#ffffff" stroke-width="1.8"/>
<path d="M829 1049.8 H824 Q819.8 1049.8 819.8 1054.3 Q819.8 1058.8 824 1058.8 H829" stroke="#ffffff" stroke-width="1.8" fill="none"/>
<rect x="799" y="1077" width="51" height="3" fill="#76b9ed"/>
<!-- chrome -->
<circle cx="886" cy="1054.9" r="15.1" fill="#1e9e48"/>
<path d="M886 1054.9 L873 1047.4 A15.1 15.1 0 0 1 899.1 1047.4 Z" fill="#e53a30"/>
<path d="M886 1054.9 L899.1 1047.4 A15.1 15.1 0 0 1 886 1070 Z" fill="#fcc82a"/>
<path d="M886 1054.9 L873 1047.4 L879.5 1058.5 Z" fill="#e53a30"/>
<circle cx="886" cy="1054.9" r="7.4" fill="#ffffff"/><circle cx="886" cy="1054.9" r="5.9" fill="#3b7ee8"/>
<rect x="861" y="1077" width="51" height="3" fill="#76b9ed"/>
<!-- fusion -->
<path d="M934 1042.5 L938.5 1040.5 V1065 L934 1069 Z" fill="#ff9a48"/>
<rect x="937.5" y="1040" width="23" height="22" rx="1" fill="#ff6e00"/>
<rect x="937.5" y="1061" width="24" height="9" fill="#a84400"/>
<path d="M945.8 1044.6 H953 V1047 H948.3 V1049.2 H952.2 V1051.5 H948.3 V1055.8 H945.8 Z" fill="#ffffff"/>
<text x="949.5" y="1068.3" font-family="Liberation Sans" font-weight="bold" font-size="6" fill="#f4e0d0" text-anchor="middle">FUS</text>
<rect x="923" y="1077" width="51" height="3" fill="#76b9ed"/>
<!-- green A -->
<path d="M1009.8 1040.6 L1025 1068.5 Q1018 1062 1009.8 1059.5 Q1002 1062 994.7 1068.5 Z" fill="url(#grnA)"/>
<path d="M1009.8 1048 L1015.8 1059 Q1013 1057.5 1009.8 1057.5 Q1006.5 1057.5 1004 1059 Z" fill="#23231d"/>
<rect x="985" y="1077" width="51" height="3" fill="#76b9ed"/>
<!-- active creality -->
<rect x="1042" y="1030" width="61" height="50" fill="#4b4a45"/>
<rect x="1042" y="1077" width="61" height="3" fill="#76b9ed"/>
<g transform="translate(1057 1039.7) scale(0.79 0.822)">
<rect x="0" y="0" width="38" height="37" rx="8" fill="#f4f5f6"/>
<path d="M9.5 26 L14 37 H30 Q38 37 38 29 V15 L31 10 L22 22 Z" fill="#c6effc"/>
<circle cx="10.8" cy="18.6" r="5.6" fill="none" stroke="#8fdcf8" stroke-width="4.6" stroke-dasharray="1.5 1" opacity="0.9"/>
<path d="M10.8 24.4 Q15 24.4 17.5 20 L19.5 16.5 Q22 12.6 26.5 12.6 Q32.5 12.6 32.5 18.6 Q32.5 24.6 26.5 24.6 Q22.2 24.6 22.2 20.5 Q22.2 17 25.5 17" fill="none" stroke="url(#lg2)" stroke-width="5"/>
<path d="M26.5 12.6 Q32.5 12.6 32.5 18.6" fill="none" stroke="#0a9ad8" stroke-width="5"/>
</g>
<!-- tray -->
<g stroke="#ffffff" stroke-width="1.2" fill="none">
<path d="M1627 1058.8 L1635 1050.5 L1643 1058.8"/>
<rect x="1659.5" y="1050" width="9.5" height="9.5" rx="1.5"/><path d="M1669 1052.5 L1673 1050.5 V1059 L1669 1057 M1661 1047.5 Q1666 1045 1671 1047.5 M1661 1062 Q1666 1064.5 1671 1062"/>
<rect x="1688" y="1050.5" width="16" height="9" rx="0.5"/><path d="M1704.8 1053 V1057 M1685.5 1049 V1052 M1687.5 1049 V1052 M1685 1052.5 H1688.5 M1686.6 1053 V1060"/>
<path d="M1718.3 1063 Q1718.3 1050 1732.8 1048.2 M1721.2 1063 Q1721.2 1053 1731 1051.5 M1724 1063 Q1724 1056 1730 1055"/>
<path d="M1745.5 1051.5 H1749 L1754 1046.5 V1063.5 L1749 1058.5 H1745.5 Z M1756.8 1052 Q1758.5 1055 1756.8 1058 M1759.5 1049.5 Q1762.5 1055 1759.5 1060.5 M1762.2 1047 Q1766.5 1055 1762.2 1063"/>
</g>
<rect x="1687.5" y="1051" width="16" height="8" fill="#ffffff"/>
<circle cx="1731.5" cy="1062" r="1.4" fill="#ffffff"/>
<!-- notification -->
<path d="M1869 1045.5 H1889.5 V1058.5 H1876 L1872.5 1062 V1058.5 H1869 Z" fill="#ffffff"/>
<g stroke="#2a2a2a" stroke-width="1"><path d="M1873 1049.5 H1885.5 M1873 1052.3 H1885.5 M1873 1055 H1885.5"/></g>
<circle cx="1888.2" cy="1064.2" r="10" fill="#3a3a38" stroke="#707070" stroke-width="1"/>
<text x="1888.5" y="1069.5" font-family="Liberation Sans" font-size="14" fill="#ffffff" text-anchor="middle">2</text>
<rect x="1913.5" y="1030" width="1" height="50" fill="#8a8a8a"/>
</svg>
<div class="a" style="left:110px;top:1046px;font:18px 'Liberation Sans';color:#1e1e1e;white-space:nowrap;transform:scaleX(1.02);transform-origin:0 0">Type here to search</div>
<div class="a" style="left:1786px;top:1035px;font:15px 'Liberation Sans';color:#ffffff;white-space:nowrap">1:32 AM</div>
<div class="a" style="left:1778px;top:1057px;font:15px 'Liberation Sans';color:#ffffff;white-space:nowrap">4/29/2025</div>
</body></html>
